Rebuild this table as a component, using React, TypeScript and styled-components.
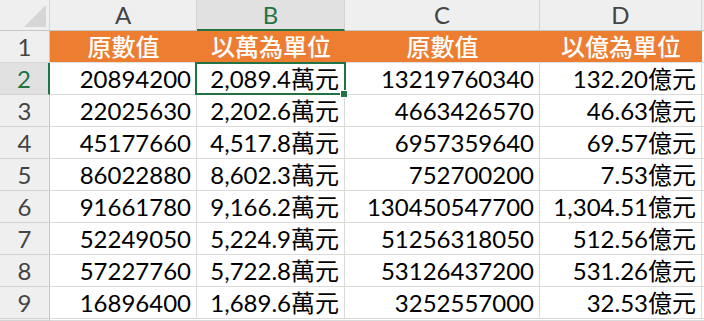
import React from 'react';
import styled, { createGlobalStyle, css } from 'styled-components';

const GlobalStyle = createGlobalStyle`
  html, body {
    margin: 0;
    padding: 0;
    background: #ffffff;
  }
  body {
    font-family: Lato, "Noto Sans CJK TC", sans-serif;
  }
`;

const COLS = ['A', 'B', 'C', 'D'];
const HEADERS = ['原數值', '以萬為單位', '原數值', '以億為單位'];
const ROWS = [
  ['20894200', '2,089.4萬元', '13219760340', '132.20億元'],
  ['22025630', '2,202.6萬元', '4663426570', '46.63億元'],
  ['45177660', '4,517.8萬元', '6957359640', '69.57億元'],
  ['86022880', '8,602.3萬元', '752700200', '7.53億元'],
  ['91661780', '9,166.2萬元', '130450547700', '1,304.51億元'],
  ['52249050', '5,224.9萬元', '51256318050', '512.56億元'],
  ['57227760', '5,722.8萬元', '53126437200', '531.26億元'],
  ['16896400', '1,689.6萬元', '3252557000', '32.53億元']
];

const Sheet = styled.div`
  display: grid;
  grid-template-columns: 50px 147px 148px 195px 162px 2px;
  grid-template-rows: 31px repeat(9, 32px) 2px;
  width: 704px;
  overflow: hidden;
  background: #ffffff;
`;

const Corner = styled.div`
  position: relative;
  background: #efefef;
  border-right: 1px solid #d4d4d4;
  border-bottom: 1px solid #c8c8c8;
  box-sizing: border-box;
  svg {
    position: absolute;
    right: 3px;
    bottom: 3px;
  }
`;

const ColHead = styled.div<{ $active?: boolean }>`
  display: flex;
  align-items: center;
  justify-content: center;
  box-sizing: border-box;
  background: ${(p) => (p.$active ? '#e1e1e1' : '#efefef')};
  color: ${(p) => (p.$active ? '#217346' : '#444444')};
  border-right: 1px solid #d4d4d4;
  border-bottom: ${(p) => (p.$active ? '2px solid #217346' : '1px solid #c8c8c8')};
  font-family: Lato, sans-serif;
  font-size: 24px;
  line-height: 1;
  padding-top: ${(p) => (p.$active ? '1px' : '0')};
`;

const RowHead = styled.div<{ $active?: boolean }>`
  display: flex;
  align-items: center;
  justify-content: center;
  box-sizing: border-box;
  background: ${(p) => (p.$active ? '#e1e1e1' : '#efefef')};
  color: ${(p) => (p.$active ? '#217346' : '#444444')};
  border-right: ${(p) => (p.$active ? '2px solid #217346' : '1px solid #c8c8c8')};
  border-bottom: 1px solid #d4d4d4;
  font-family: Lato, sans-serif;
  font-size: 24px;
  line-height: 1;
`;

const TitleCell = styled.div`
  display: flex;
  align-items: center;
  justify-content: center;
  box-sizing: border-box;
  background: #ed7d31;
  color: #ffffff;
  font-size: 24px;
  font-weight: 500;
  line-height: 1;
  border-bottom: 1px solid #e1e1e1;
`;

const Cell = styled.div<{ $selected?: boolean }>`
  position: relative;
  display: flex;
  align-items: center;
  justify-content: flex-end;
  box-sizing: border-box;
  padding-right: 5px;
  color: #000000;
  font-size: 24px;
  line-height: 1;
  white-space: nowrap;
  border-right: 1px solid #dadada;
  border-bottom: 1px solid #dadada;
  ${(p) =>
    p.$selected &&
    css`
      &::before {
        content: '';
        position: absolute;
        left: -2px;
        top: -1px;
        right: -2px;
        bottom: -1px;
        border: 2px solid #217346;
        pointer-events: none;
      }
      &::after {
        content: '';
        position: absolute;
        right: -4px;
        bottom: -4px;
        width: 6px;
        height: 6px;
        background: #217346;
        border: 1px solid #ffffff;
        z-index: 2;
      }
    `}
`;

const Edge = styled.div<{ $head?: boolean }>`
  box-sizing: border-box;
  background: ${(p) => (p.$head ? '#efefef' : '#ffffff')};
  border-bottom: ${(p) => (p.$head ? '1px solid #c8c8c8' : '1px solid #dadada')};
`;

export default function App() {
  return (
    <>
      <GlobalStyle />
      <Sheet>
        <Corner>
          <svg width="22" height="22" viewBox="0 0 22 22">
            <polygon points="22,0 22,22 0,22" fill="#d6d6d6" />
          </svg>
        </Corner>
        {COLS.map((c) => (
          <ColHead key={c} $active={c === 'B'}>
            {c}
          </ColHead>
        ))}
        <Edge $head />

        <RowHead>1</RowHead>
        {HEADERS.map((h, i) => (
          <TitleCell key={i}>{h}</TitleCell>
        ))}
        <Edge />

        {ROWS.map((row, r) => (
          <React.Fragment key={r}>
            <RowHead $active={r === 0}>{r + 2}</RowHead>
            {row.map((v, c) => (
              <Cell key={c} $selected={r === 0 && c === 1}>
                {v}
              </Cell>
            ))}
            <Edge />
          </React.Fragment>
        ))}

        <RowHead />
        <Edge />
        <Edge />
        <Edge />
        <Edge />
        <Edge />
      </Sheet>
    </>
  );
}
